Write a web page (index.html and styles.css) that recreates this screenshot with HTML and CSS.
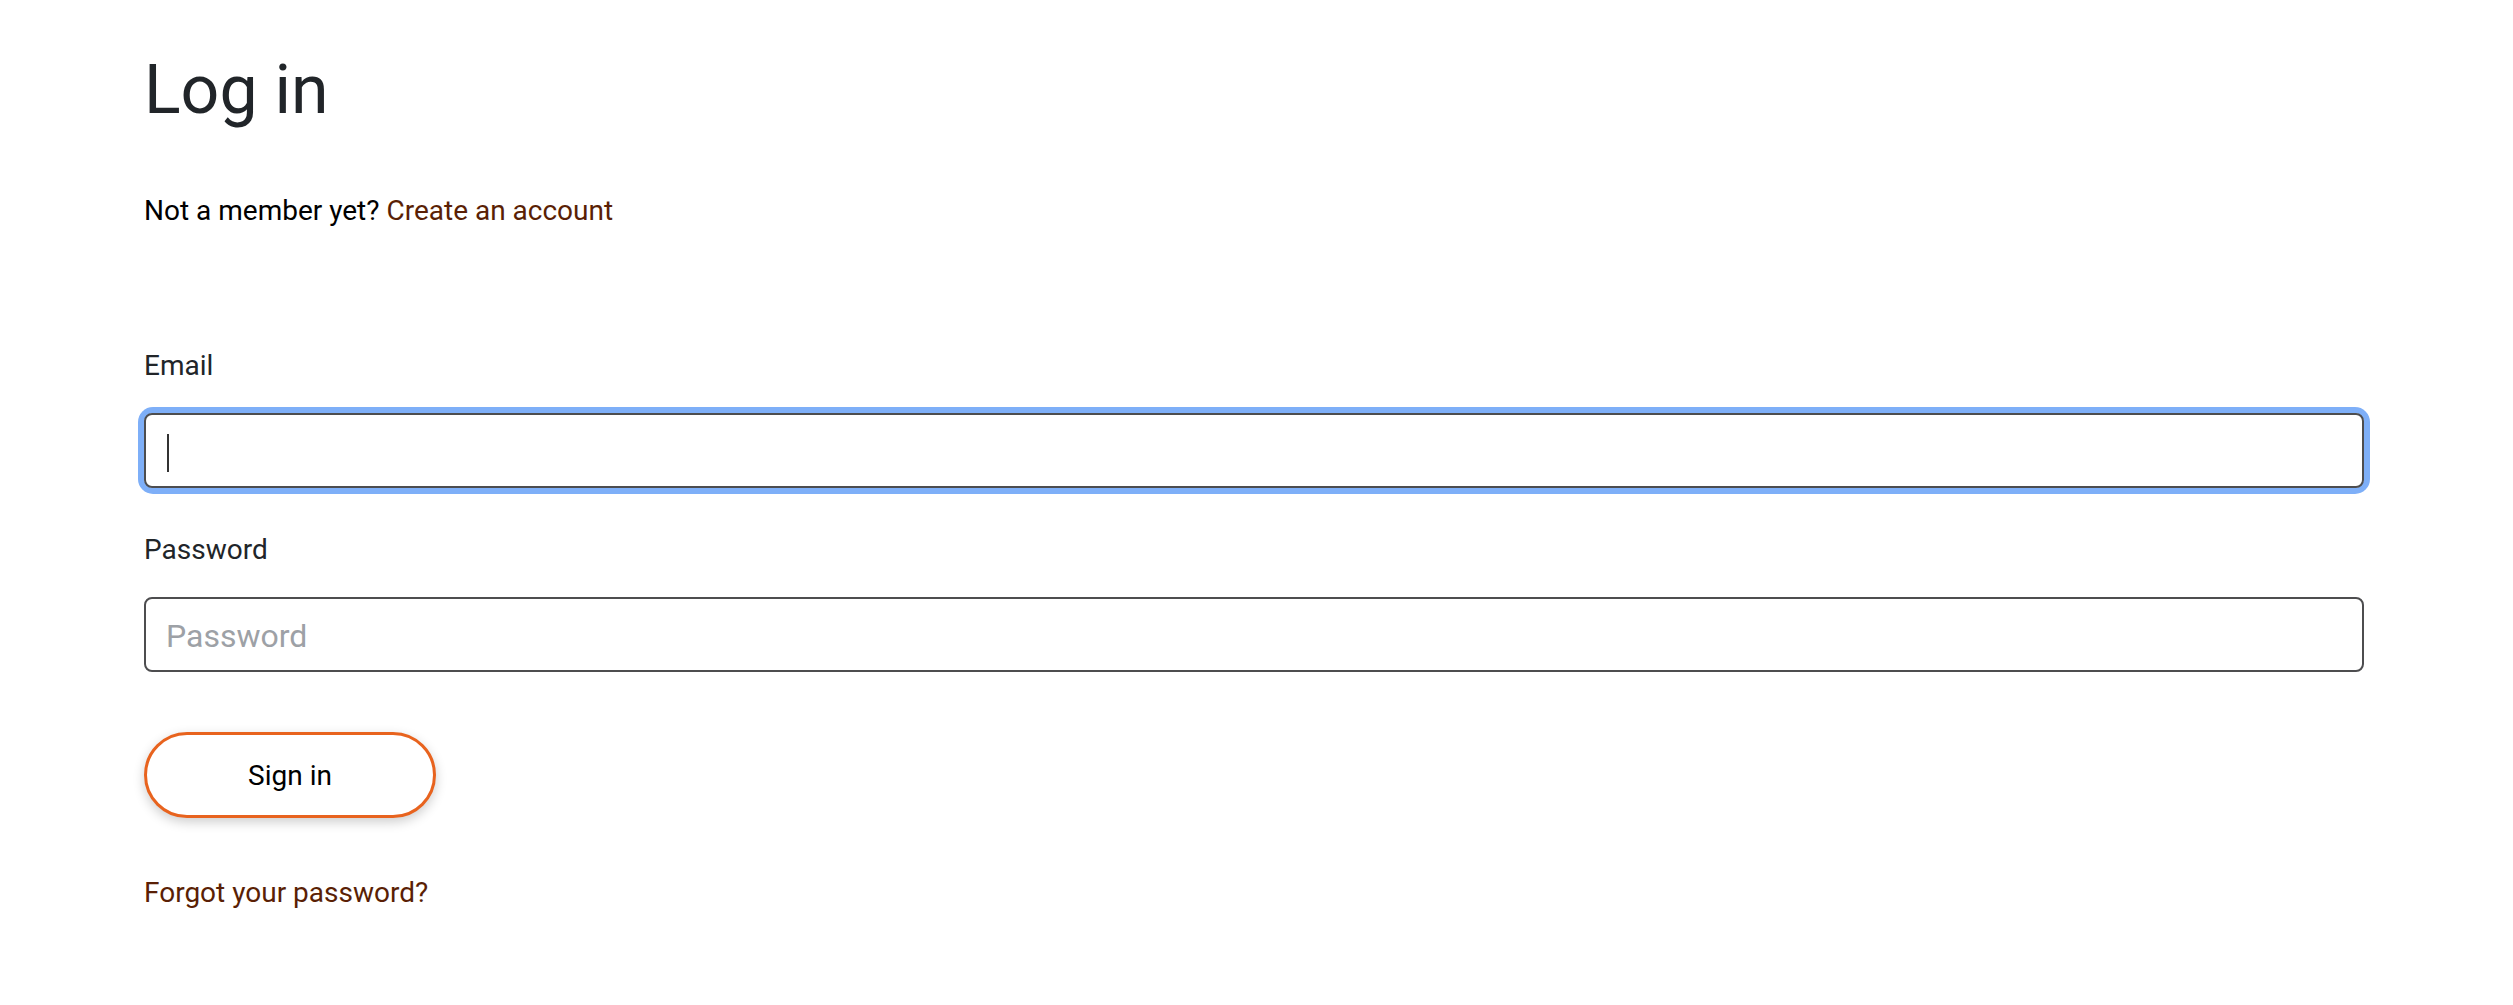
FILE: index.html
```html
<!DOCTYPE html>
<html lang="en">
<head>
    <meta charset="UTF-8">
    <meta name="viewport" content="width=device-width, initial-scale=1.0">
    <title>Log in</title>
    <link rel="stylesheet" href="styles.css">
</head>
<body>
    <div class="login-page">
        <h1>Log in</h1>
        <p class="signup-line">Not a member yet? <a href="#">Create an account</a></p>

        <form class="login-form">
            <div class="input-group">
                <label for="email">Email</label>
                <div class="field is-focused">
                    <input type="email" id="email">
                    <span class="caret"></span>
                </div>
            </div>
            <div class="input-group">
                <label for="password">Password</label>
                <div class="field">
                    <input type="password" id="password" placeholder="Password">
                </div>
            </div>
            <button type="button" class="sign-in-button">Sign in</button>
        </form>

        <a href="#" class="forgot-link">Forgot your password?</a>
    </div>
</body>
</html>
```

FILE: styles.css
```css
body {
    margin: 0;
    font-family: Roboto, "Liberation Sans", sans-serif;
    font-size: 28px;
    color: #000;
    background-color: #fff;
}
.login-page {
    padding: 48px 149px 0 144px;
}
.login-page h1 {
    margin: 0 0 61px 0;
    font-size: 68px;
    font-weight: 400;
    line-height: 84px;
    color: #212529;
}
.signup-line {
    margin: 0 0 119px 0;
    line-height: 36px;
}
a {
    color: #5a1f05;
    text-decoration: none;
}
.input-group {
    margin-bottom: 44px;
}
.input-group label {
    display: block;
    margin-bottom: 29px;
    font-size: 28px;
    line-height: 36px;
    color: #212529;
}
.field {
    position: relative;
    border-radius: 9px;
}
.field input {
    display: block;
    box-sizing: border-box;
    width: 100%;
    height: 75px;
    padding: 3px 20px 0 20px;
    border: 2px solid #4d4d4f;
    border-radius: 8px;
    font-family: inherit;
    font-size: 32px;
    color: #212529;
    background: #fff;
    outline: none;
}
.field input::placeholder {
    color: #9da1a6;
}
.field.is-focused {
    box-shadow: 0 0 0 6px #7eaff8;
}
.caret {
    position: absolute;
    left: 23px;
    top: 21px;
    width: 2px;
    height: 38px;
    background: #333;
}
.input-group:last-of-type {
    margin-bottom: 60px;
}
.sign-in-button {
    display: block;
    box-sizing: border-box;
    width: 292px;
    height: 86px;
    border: 3px solid #e8631e;
    border-radius: 43px;
    background: #fff;
    font-family: inherit;
    font-size: 28px;
    color: #000;
    box-shadow: 0 4px 12px rgba(0, 0, 0, 0.2);
    cursor: pointer;
}
.forgot-link {
    display: block;
    margin-top: 57px;
    line-height: 36px;
    width: max-content;
}
```
